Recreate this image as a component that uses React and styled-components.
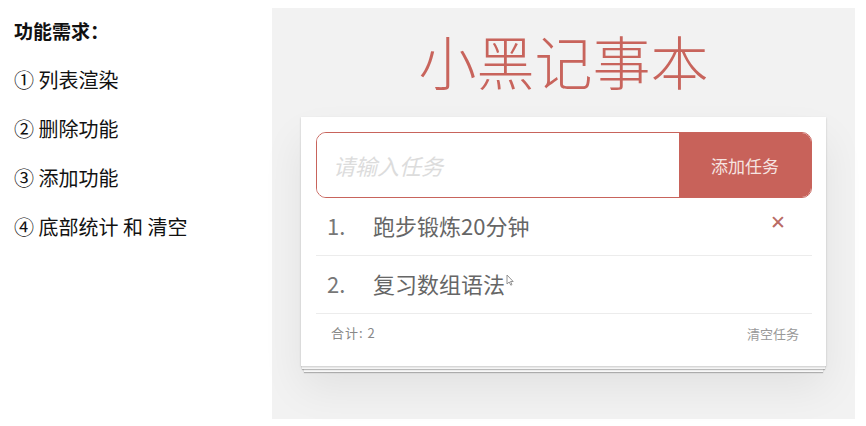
import React, { useState } from 'react';
import styled, { createGlobalStyle } from 'styled-components';

const GlobalStyle = createGlobalStyle`
  body {
    margin: 0;
    background: #fff;
    font-family: "Noto Sans CJK SC", "Noto Sans", sans-serif;
  }
`;

const Page = styled.div`
  display: flex;
  width: 866px;
  height: 426px;
`;

const Notes = styled.div`
  width: 258px;
  padding: 6px 0 0 14px;
  color: #111;
  font-size: 20px;
  line-height: 49px;
`;

const NotesTitle = styled.div`
  font-weight: 700;
  font-size: 19px;
`;

const Panel = styled.section`
  margin-top: 8px;
  width: 583px;
  height: 411px;
  background: #f2f2f2;
  display: flex;
  flex-direction: column;
  align-items: center;
`;

const Title = styled.h1`
  margin: 0;
  height: 109px;
  line-height: 104px;
  font-size: 58px;
  font-weight: 300;
  color: #c8645c;
`;

const Card = styled.div`
  width: 525px;
  background: #fff;
  padding: 15px 14px 0 15px;
  box-sizing: border-box;
  box-shadow: 0 1px 2px rgba(0, 0, 0, 0.2),
    0 4px 0 -1px #f8f8f8,
    0 5px 1px -1px rgba(0, 0, 0, 0.25),
    0 9px 0 -3px #f8f8f8,
    0 10px 1px -3px rgba(0, 0, 0, 0.25),
    0 22px 40px rgba(0, 0, 0, 0.07);
`;

const InputRow = styled.div`
  display: flex;
  height: 66px;
  border: 1px solid #c8645c;
  border-radius: 10px;
  overflow: hidden;
  box-sizing: border-box;
`;

const TaskInput = styled.input`
  flex: 1;
  border: none;
  outline: none;
  padding: 0 16px;
  font-family: inherit;
  font-size: 22px;
  color: #555;
  background: #fff;
  &::placeholder {
    color: #dcdcdc;
    font-style: italic;
  }
`;

const AddButton = styled.button`
  width: 132px;
  border: none;
  background: #c8625a;
  color: #f6e4e1;
  font-family: inherit;
  font-size: 17px;
  cursor: pointer;
`;

const List = styled.ul`
  list-style: none;
  margin: 0;
  padding: 0;
`;

const Item = styled.li`
  display: flex;
  align-items: center;
  height: 57px;
  padding: 0 26px 0 11px;
  border-bottom: 1px solid #ececec;
  color: #666;
  font-size: 22px;
  line-height: 30px;
`;

const Index = styled.span`
  width: 46px;
  margin-top: -4px;
  color: #777;
`;

const Text = styled.span`
  flex: 1;
  display: flex;
  align-items: flex-start;
  margin-top: -4px;
  svg {
    margin: 6px 0 0 1px;
  }
`;

const Remove = styled.button`
  border: none;
  background: none;
  padding: 0;
  color: #b96a64;
  font-size: 19px;
  font-family: "Liberation Sans", sans-serif;
  margin-top: -8px;
  cursor: pointer;
  visibility: ${(p) => (p.$show ? 'visible' : 'hidden')};
`;

const Footer = styled.div`
  display: flex;
  justify-content: space-between;
  height: 52px;
  padding: 9px 13px 0 15px;
  box-sizing: border-box;
  font-size: 13px;
  color: #888;
`;

const Count = styled.span`
  letter-spacing: 1px;
`;

const ClearButton = styled.button`
  border: none;
  background: none;
  padding: 0;
  height: 20px;
  font-family: inherit;
  font-size: 13px;
  color: #999;
  cursor: pointer;
`;

const Pointer = () => (
  <svg width="8" height="12" viewBox="0 0 8 12">
    <path d="M1 1 L1 10 L3.2 8 L4.8 11.2 L6 10.6 L4.5 7.5 L7.2 7.5 Z" fill="#fff" stroke="#888" strokeWidth="0.9" strokeLinejoin="round" />
  </svg>
);

const App = () => {
  const [todos, setTodos] = useState(['跑步锻炼20分钟', '复习数组语法']);
  const [value, setValue] = useState('');

  const add = () => {
    if (!value.trim()) return;
    setTodos([...todos, value.trim()]);
    setValue('');
  };

  const remove = (i) => setTodos(todos.filter((_, idx) => idx !== i));

  return (
    <>
      <GlobalStyle />
      <Page>
        <Notes>
          <NotesTitle>功能需求：</NotesTitle>
          <div>① 列表渲染</div>
          <div>② 删除功能</div>
          <div>③ 添加功能</div>
          <div>④ 底部统计 和 清空</div>
        </Notes>
        <Panel>
          <Title>小黑记事本</Title>
          <Card>
            <InputRow>
              <TaskInput
                placeholder="请输入任务"
                value={value}
                onChange={(e) => setValue(e.target.value)}
              />
              <AddButton onClick={add}>添加任务</AddButton>
            </InputRow>
            <List>
              {todos.map((t, i) => (
                <Item key={i}>
                  <Index>{i + 1}.</Index>
                  <Text>
                    {t}
                    {i === 1 && <Pointer />}
                  </Text>
                  <Remove $show={i === 0} onClick={() => remove(i)}>✕</Remove>
                </Item>
              ))}
            </List>
            <Footer>
              <Count>合计: {todos.length}</Count>
              <ClearButton onClick={() => setTodos([])}>清空任务</ClearButton>
            </Footer>
          </Card>
        </Panel>
      </Page>
    </>
  );
};

export default App;
